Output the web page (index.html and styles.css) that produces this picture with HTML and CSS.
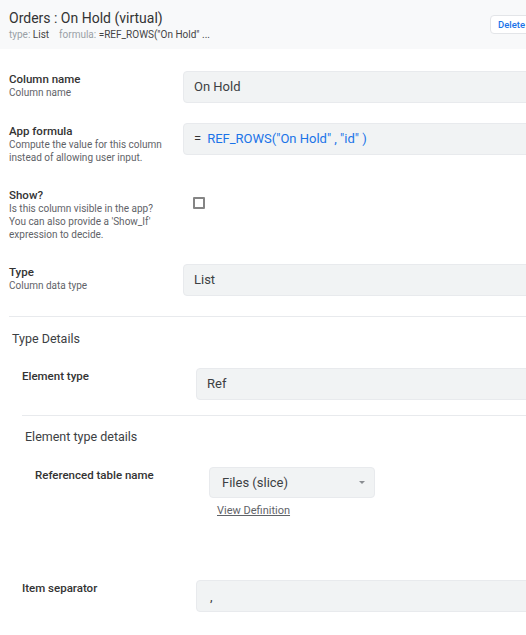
FILE: index.html
```html
<!DOCTYPE html>
<html>
<head>
<meta charset="utf-8">
<link rel="stylesheet" href="styles.css">
</head>
<body>
<div class="header">
  <div class="header-text">
    <div class="title">Orders : On Hold (virtual)</div>
    <div class="meta"><span class="k">type:</span> <span class="v">List</span><span class="k gap">formula:</span> <span class="v">=REF_ROWS("On Hold" ...</span></div>
  </div>
  <button class="delete">Delete</button>
</div>
<div class="form">
  <div class="row">
    <div class="label-col"><div class="label">Column name</div><div class="sub">Column name</div></div>
    <div class="field">On Hold</div>
  </div>
  <div class="row">
    <div class="label-col"><div class="label">App formula</div><div class="sub">Compute the value for this column<br>instead of allowing user input.</div></div>
    <div class="field"><span class="eq">=</span><span class="formula">REF_ROWS("On Hold" , "id" )</span></div>
  </div>
  <div class="row">
    <div class="label-col"><div class="label">Show?</div><div class="sub">Is this column visible in the app?<br>You can also provide a 'Show_If'<br>expression to decide.</div></div>
    <div class="check-wrap"><span class="checkbox"></span></div>
  </div>
  <div class="row">
    <div class="label-col"><div class="label">Type</div><div class="sub">Column data type</div></div>
    <div class="field">List</div>
  </div>
  <div class="section">
    <div class="heading">Type Details</div>
    <div class="section-body">
      <div class="row tight">
        <div class="label-col"><div class="label">Element type</div></div>
        <div class="field">Ref</div>
      </div>
      <div class="section sub-section">
        <div class="heading h2">Element type details</div>
        <div class="section-body">
          <div class="row">
            <div class="label-col"><div class="label">Referenced table name</div></div>
            <div class="select-col">
              <div class="select"><span>Files (slice)</span><span class="arrow"></span></div>
              <a class="link">View Definition</a>
            </div>
          </div>
        </div>
      </div>
      <div class="row">
        <div class="label-col"><div class="label">Item separator</div></div>
        <div class="field sep">,</div>
      </div>
    </div>
  </div>
</div>
</body>
</html>
```
FILE: styles.css
```css
html, body {
  margin: 0;
  padding: 0;
  overflow: hidden;
  background: #fff;
  font-family: Roboto, "Liberation Sans", sans-serif;
  color: #333;
}
.header {
  height: 49px;
  box-sizing: border-box;
  background: #f8f9fa;
  padding: 9px 0 0 9px;
  display: flex;
  justify-content: space-between;
  align-items: flex-start;
}
.title {
  font-size: 14px;
  line-height: 18px;
  color: #333;
}
.meta {
  margin-top: 1px;
  font-size: 10px;
  line-height: 13px;
  color: #444;
}
.meta .k { color: #9aa0a6; }
.meta .v { color: #444; }
.meta .gap { margin-left: 10px; }
.delete {
  margin-top: 6px;
  margin-right: -12px;
  height: 19px;
  padding: 0 12px 0 7px;
  background: #fff;
  border: 1px solid #e3e5e8;
  border-radius: 4px;
  color: #1a73e8;
  font-family: Roboto, "Liberation Sans", sans-serif;
  font-size: 9.5px;
  font-weight: 500;
  line-height: 17px;
}
.form {
  padding: 22px 0 0 9px;
}
.row {
  display: flex;
  align-items: flex-start;
  margin-bottom: 20px;
}
.row.tight { margin-bottom: 15px; }
.label-col {
  width: 174px;
  flex-shrink: 0;
  padding: 1px 0 3px;
}
.label {
  font-size: 11.5px;
  line-height: 14px;
  font-weight: 500;
  color: #333;
}
.sub {
  font-size: 10px;
  line-height: 13px;
  color: #5f6368;
}
.field {
  flex: 1;
  margin-right: -10px;
  height: 32px;
  box-sizing: border-box;
  background: #f1f3f4;
  border: 1px solid #e8eaed;
  border-radius: 4px;
  padding: 0 10px;
  font-size: 13px;
  line-height: 30px;
  color: #3c4043;
  white-space: nowrap;
}
.eq { color: #333; margin-right: 6px; }
.formula { color: #1a73e8; }
.check-wrap { padding: 10px 0 0 10px; }
.checkbox {
  display: block;
  width: 12px;
  height: 12px;
  box-sizing: border-box;
  border: 2px solid #858585;
  border-radius: 1px;
  background: #fff;
}
.section {
  border-top: 1px solid #e8eaed;
}
.heading {
  margin: 14px 0 21px;
  padding-left: 3px;
  font-size: 12.5px;
  line-height: 16px;
  color: #3c4043;
}
.heading.h2 { margin: 13px 0 22px; }
.section-body { padding-left: 13px; }
.sub-section { padding-bottom: 42px; }
.select-col {
  display: flex;
  flex-direction: column;
  align-items: flex-start;
}
.select {
  width: 166px;
  height: 31px;
  box-sizing: border-box;
  background: #f1f3f4;
  border: 1px solid #e8eaed;
  border-radius: 4px;
  padding: 0 9px 0 12px;
  display: flex;
  align-items: center;
  justify-content: space-between;
  font-size: 13px;
  color: #3c4043;
}
.arrow {
  width: 0;
  height: 0;
  border-left: 3.5px solid transparent;
  border-right: 3.5px solid transparent;
  border-top: 3.5px solid #8a8d91;
}
.link {
  margin: 6px 0 0 8px;
  font-size: 11px;
  line-height: 14px;
  color: #5f6368;
  text-decoration: underline;
}
.field.sep { padding-left: 13px; line-height: 32px; }
```
